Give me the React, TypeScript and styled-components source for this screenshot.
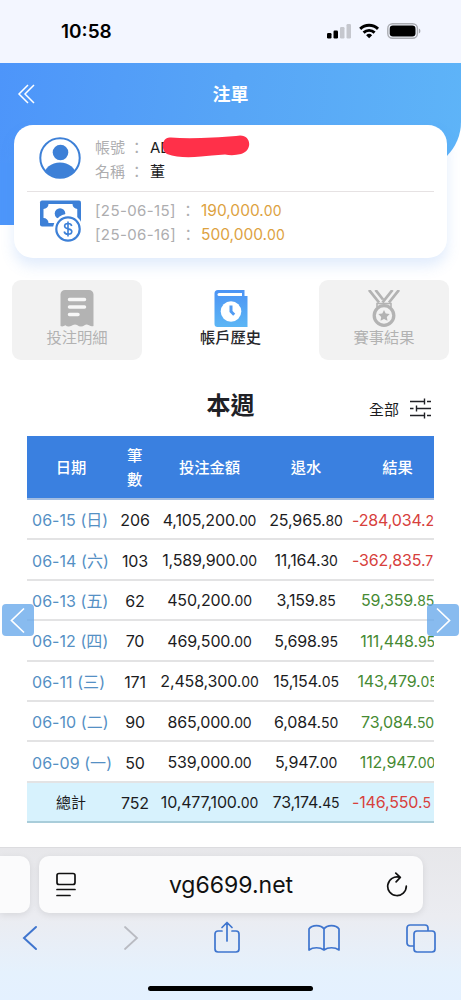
import type { ReactNode } from "react"
import styled, { createGlobalStyle } from "styled-components"

const GlobalStyle = createGlobalStyle`
  * {
    box-sizing: border-box;
  }
  body {
    margin: 0;
    background-color: #ffffff;
    font-family: Inter, "Noto Sans CJK TC", sans-serif;
    color: #1c1c1e;
  }
`

const Screen = styled.div`
  display: flex;
  flex-direction: column;
  width: 461px;
  height: 1000px;
  overflow: hidden;
  background-color: #ffffff;
`

const StatusBar = styled.div`
  display: flex;
  justify-content: space-between;
  flex: none;
  height: 63px;
  padding: 21px 40px 0 61px;
  background-color: #f3f6ff;
`

const Clock = styled.div`
  font-size: 19px;
  font-weight: 600;
  line-height: 21px;
  letter-spacing: 0;
  color: #000000;
`

const Hero = styled.div`
  position: relative;
  flex: none;
  height: 217px;

  /* the blue backdrop is shorter on the right, where its corner is rounded */
  &::before,
  &::after {
    content: "";
    position: absolute;
    top: 0;
    left: 0;
    width: 461px;
    height: 107px;
    border-bottom-right-radius: 48px;
    background: linear-gradient(97deg, #4d95fa 0%, #57a5f6 50%, #5eb4f8 100%);
  }
  &::after {
    top: 100px;
    width: 60px;
    height: 62px;
    border-radius: 0;
    background: #4d96fa;
  }
`

const TitleBar = styled.div`
  position: relative;
  z-index: 1;
  display: grid;
  grid-template-columns: 60px 1fr 60px;
  align-items: center;
  height: 62px;
  color: #ffffff;
`

const Title = styled.div`
  padding-top: 2px;
  text-align: center;
  font-size: 18px;
  font-weight: 700;
  line-height: 26px;
`

const BackIcon = styled.svg`
  display: block;
  margin-left: 17px;
`

const Card = styled.div`
  position: relative;
  z-index: 1;
  margin: 0 14px;
  height: 133px;
  padding: 0 13px;
  border-radius: 19px;
  background-color: #ffffff;
  box-shadow: 0 8px 14px rgba(80, 140, 235, 0.17);
`

const CardSection = styled.div<{ $last?: boolean }>`
  position: relative;
  display: flex;
  gap: 14px;
  height: ${(p) => (p.$last ? "66px" : "67px")};
  padding: ${(p) => (p.$last ? "8px 0 0 12px" : "12px 0 0 12px")};
  border-bottom: ${(p) => (p.$last ? "none" : "1px solid #e6e2e3")};
`

const Lines = styled.div`
  display: flex;
  flex-direction: column;
  margin-top: -1px;
  font-size: 15px;
  line-height: 24px;
`

const Line = styled.div<{ $width: number }>`
  display: grid;
  grid-template-columns: ${(p) => p.$width}px auto;
  height: 24px;
  white-space: pre;
`

const Label = styled.span<{ $spacing?: number }>`
  color: #adadaf;
  letter-spacing: ${(p) => p.$spacing ?? 0}px;
`

const Money = styled.span`
  color: #dda23f;
  font-size: 15.5px;
  letter-spacing: 0;
  small {
    font-size: 14px;
  }
`

const Redaction = styled.svg`
  position: absolute;
  left: 134px;
  top: 8px;
`

const Tabs = styled.div`
  display: flex;
  justify-content: space-between;
  flex: none;
  height: 80px;
  padding: 0 12px;
`

const Tab = styled.div<{ $active?: boolean }>`
  display: flex;
  flex-direction: column;
  align-items: center;
  width: 130px;
  height: 80px;
  padding-top: 10px;
  border-radius: 9px;
  font-size: 15.3px;
  line-height: 22px;
  font-weight: ${(p) => (p.$active ? 500 : 400)};
  color: ${(p) => (p.$active ? "#27272b" : "#b2b2b2")};
  background-color: ${(p) => (p.$active ? "transparent" : "#f2f2f2")};
  svg {
    flex: none;
  }
`

const Heading = styled.div`
  display: grid;
  grid-template-columns: 1fr auto 1fr;
  flex: none;
  height: 76px;
  padding: 28px 30px 0;
`

const Week = styled.div`
  grid-column: 2;
  font-size: 24px;
  font-weight: 700;
  line-height: 36px;
  color: #202126;
`

const Filter = styled.div`
  display: flex;
  align-items: center;
  justify-content: flex-end;
  gap: 11px;
  height: 24px;
  margin-top: 8px;
  font-size: 15px;
`

const History = styled.div`
  position: relative;
  flex: none;
  height: 411px;
  padding: 0 27px;
`

const Table = styled.div`
  width: 407px;
  overflow: hidden;
`

const Row = styled.div<{ $head?: boolean; $total?: boolean }>`
  display: grid;
  grid-template-columns: 88px 40px 109px 84px 99px;
  align-items: center;
  justify-items: center;
  width: 420px;
  height: ${(p) => (p.$head ? "64px" : "40.4px")};
  padding-top: ${(p) => (p.$head ? "1px" : "2px")};
  border-bottom: 2px solid ${(p) => (p.$total ? "#a9cdda" : p.$head ? "#a3bde1" : "#e3e3e4")};
  background-color: ${(p) => (p.$head ? "#3a80e0" : p.$total ? "#d7f2fd" : "#ffffff")};
  font-size: ${(p) => (p.$head ? "15.3px" : "16px")};
  font-weight: ${(p) => (p.$head ? 500 : 400)};
  line-height: 24px;
  white-space: nowrap;
  color: ${(p) => (p.$head ? "#ffffff" : "#1c1c1e")};
`

const Wrapped = styled.span`
  width: 16px;
  white-space: normal;
`

const DateCell = styled.span`
  justify-self: start;
  padding-left: 5px;
  color: #5590c4;
  letter-spacing: 0.05px;
`

const TotalLabel = styled.span`
  font-size: 15px;
`

const Amount = styled.span`
  letter-spacing: -0.15px;
  small {
    font-size: 14px;
  }
`

const Result = styled(Amount)<{ $negative: boolean }>`
  justify-self: ${(p) => (p.$negative ? "start" : "center")};
  padding-left: ${(p) => (p.$negative ? "4px" : "0")};
  color: ${(p) => (p.$negative ? "#d7403c" : "#468a33")};
`

const Pager = styled.div<{ $side: "left" | "right" }>`
  position: absolute;
  top: 168px;
  ${(p) => p.$side}: 2px;
  display: flex;
  align-items: center;
  justify-content: center;
  width: 32px;
  height: 32px;
  border-radius: 4px;
  background-color: rgba(103, 168, 234, 0.78);
`

const Browser = styled.div`
  display: flex;
  flex-direction: column;
  align-items: center;
  flex: none;
  height: 153px;
  border-top: 1px solid #dcdcdf;
  background: linear-gradient(#e7e7ea 0%, #ebecf1 45%, #e5f1fd 82%, #e4f1ff 100%);
`

const AddressRow = styled.div`
  display: flex;
  gap: 9px;
  width: 461px;
  height: 64px;
  padding-top: 8px;
`

const PreviousPage = styled.div`
  width: 30px;
  height: 57px;
  border-radius: 0 10px 10px 0;
  background-color: #fbfbfc;
  box-shadow: 0 2px 7px rgba(0, 0, 0, 0.09);
`

const Address = styled.div`
  display: grid;
  grid-template-columns: 20px 1fr 22px;
  align-items: center;
  width: 384px;
  height: 57px;
  padding: 0 15px 0 17px;
  border-radius: 10px;
  background-color: #fbfbfc;
  box-shadow: 0 2px 7px rgba(0, 0, 0, 0.09);
  font-size: 23px;
  letter-spacing: 0;
  text-align: center;
  color: #111111;
  svg {
    display: block;
  }
`

const Toolbar = styled.div`
  display: grid;
  grid-template-columns: 60px 140px 54px 140px 54px;
  justify-items: center;
  width: 461px;
  height: 66px;
  padding: 9px 0 0;
`

const HomeIndicator = styled.div`
  width: 165px;
  height: 5px;
  margin-top: 8px;
  border-radius: 3px;
  background-color: #000000;
`

// the last digits of the negative results do not fit in the column
const rows = [
  { date: "06-15 (日)", count: 206, bet: "4,105,200.00", rebate: "25,965.80", result: "-284,034.2" },
  { date: "06-14 (六)", count: 103, bet: "1,589,900.00", rebate: "11,164.30", result: "-362,835.7" },
  { date: "06-13 (五)", count: 62, bet: "450,200.00", rebate: "3,159.85", result: "59,359.85" },
  { date: "06-12 (四)", count: 70, bet: "469,500.00", rebate: "5,698.95", result: "111,448.95" },
  { date: "06-11 (三)", count: 171, bet: "2,458,300.00", rebate: "15,154.05", result: "143,479.05" },
  { date: "06-10 (二)", count: 90, bet: "865,000.00", rebate: "6,084.50", result: "73,084.50" },
  { date: "06-09 (一)", count: 50, bet: "539,000.00", rebate: "5,947.00", result: "112,947.00" },
]

// decimals are set a little smaller than the whole part
function split(value: string): ReactNode {
  const [whole, cents] = value.split(".")
  return (
    <>
      {whole}.<small>{cents}</small>
    </>
  )
}

function StatusIcons() {
  return (
    <svg width="95" height="20" viewBox="326 21 95 20">
      <rect x="327" y="33" width="4.5" height="5.5" rx="1.2" fill="#000" />
      <rect x="333.5" y="30.5" width="4.5" height="8" rx="1.2" fill="#000" />
      <rect x="340" y="27" width="4.5" height="11.5" rx="1.2" fill="#c5c7ce" />
      <rect x="346.5" y="24" width="4.5" height="14.5" rx="1.2" fill="#c5c7ce" />
      <g fill="none" stroke="#000" strokeWidth="2.9">
        <path d="M360.2 28.9a12.8 12.8 0 0 1 17.8 0" />
        <path d="M363.6 32.6a8 8 0 0 1 11 0" />
      </g>
      <path d="M369.1 38.3l-3-3a4.3 4.3 0 0 1 6 0z" fill="#000" />
      <rect x="387.8" y="23.7" width="29.6" height="14.6" rx="4.8" fill="#f3f6ff" stroke="#aaacb2" strokeWidth="1.4" />
      <rect x="389.7" y="25.6" width="25.8" height="10.8" rx="3.2" fill="#000" />
      <path d="M418.9 28.6v5a2.8 2.8 0 0 0 0-5z" fill="#a5a7ad" />
    </svg>
  )
}

function UserIcon() {
  return (
    <svg width="42" height="42" viewBox="0 0 42 42">
      <clipPath id="face">
        <circle cx="21" cy="21" r="19.5" />
      </clipPath>
      <g clipPath="url(#face)" fill="#3d80d7">
        <circle cx="21.5" cy="15.5" r="7.8" />
        <ellipse cx="21" cy="38.5" rx="16" ry="13" />
      </g>
      <circle cx="21" cy="21" r="19.7" fill="none" stroke="#3d80d7" strokeWidth="2" />
    </svg>
  )
}

function MoneyIcon() {
  return (
    <svg width="42" height="43" viewBox="0 0 42 43">
      <rect x="1" y="0.5" width="41" height="26" rx="2" fill="#3d80d7" />
      <path d="M9.500 4h24a5 5 0 0 0 5 5v9a5 5 0 0 0-5 5h-24a5 5 0 0 0-5-5v-9a5 5 0 0 0 5-5z" fill="#fff" />
      <circle cx="21" cy="13.500" r="5.300" fill="#3d80d7" />
      <circle cx="29" cy="29" r="15" fill="#fff" />
      <path d="M38.500 9v8l3.500 3V9z" fill="#3d80d7" />
      <circle cx="29" cy="29" r="11.700" fill="#fff" stroke="#3d80d7" strokeWidth="2.200" />
      <path d="M32.700 26c-.3-1.600-1.700-2.500-3.600-2.500-2.100 0-3.500 1-3.500 2.600 0 3.900 7.200 1.700 7.200 5.500 0 1.700-1.500 2.700-3.700 2.700-2.200 0-3.600-1-3.900-2.800M29 21.500v15" fill="none" stroke="#3d80d7" strokeWidth="1.600" />
    </svg>
  )
}

function ReceiptIcon() {
  return (
    <svg width="34" height="37" viewBox="0 0 34 37">
      <path d="M5 0h24a4.500 4.500 0 0 1 4.500 4.500V36q-2 1-4.500-.7-2.500-1.500-4.500 0-1.500 1.300-3.500 1.300t-4-1.500q-2-1.300-4 0t-4 1.500-3.500-1.300q-3 1.800-5 .7V4.500A4.500 4.500 0 0 1 5 0z" fill="#b3b3b3" />
      <path d="M9.500 9.500h15M9.500 17h15M9.500 24.500h8.500" stroke="#f7f7f7" strokeWidth="3.500" strokeLinecap="round" />
    </svg>
  )
}

function BookClockIcon() {
  return (
    <svg width="34" height="37" viewBox="0 0 34 37">
      <defs>
        <linearGradient id="book" x1="0" y1="0" x2="0" y2="1">
          <stop offset="0" stopColor="#4c93f4" />
          <stop offset="1" stopColor="#5cb6f5" />
        </linearGradient>
      </defs>
      <path d="M4 0h26.500v6h3v31H3.500a3 3 0 0 1-3-3V3.500A3.500 3.500 0 0 1 4 0z" fill="url(#book)" />
      <path d="M5 3h23v3H5a1.500 1.500 0 0 1 0-3z" fill="#fff" />
      <circle cx="17" cy="21.500" r="10.300" fill="#fff" />
      <path d="M17 15.500v6l3.200 3.200" fill="none" stroke="#519bf3" strokeWidth="3" />
    </svg>
  )
}

function MedalIcon() {
  return (
    <svg width="34" height="37" viewBox="0 0 34 37">
      <g fill="none" stroke="#b3b3b3">
        <path d="M2 0l10 12.500M8.500 0l7.500 9.500M32 0L22 12.500M25.500 0l-10 12.500" strokeWidth="2.800" />
        <path d="M10 17v-3.500h14V17" strokeWidth="1.600" />
        <circle cx="17" cy="25.500" r="9.800" strokeWidth="3.300" />
      </g>
      <path d="M17 20l1.700 3.600 4 .5-2.900 2.800.7 3.900-3.500-1.900-3.500 1.900.7-3.900-2.900-2.800 4-.5z" fill="#b3b3b3" />
    </svg>
  )
}

function SlidersIcon() {
  return (
    <svg width="21" height="21" viewBox="0 0 21 21" fill="none" stroke="#202126" strokeWidth="1.400">
      <path d="M0 3.500h14.500M17 3.500h4M0 10.500h3.500M6.500 10.500H21M0 17.500h14.500M17 17.500h4M14.500 .5v6M6.500 7.500v6M14.500 14.500v6" />
    </svg>
  )
}

function App() {
  return (
    <Screen>
      <GlobalStyle />
      <StatusBar>
        <Clock>10:58</Clock>
        <StatusIcons />
      </StatusBar>

      <Hero>
        <TitleBar>
          <BackIcon width="18" height="20" viewBox="0 0 18 20" fill="none" stroke="#fff" strokeWidth="1.5">
            <path d="M11 1L2 10l9 9M17 1L8 10l9 9" />
          </BackIcon>
          <Title>注單</Title>
        </TitleBar>
        <Card>
          <CardSection>
            <UserIcon />
            <Lines>
              <Line $width={55}>
                <Label>帳號 ：</Label>
                <span>AD</span>
              </Line>
              <Line $width={55}>
                <Label>名稱 ：</Label>
                <span>董</span>
              </Line>
            </Lines>
            <Redaction width="90" height="26" viewBox="0 0 90 26">
              <path d="M10 4.500Q22 5.500 40 5 58 4.500 75 3C90-1 93 17 80 21Q72 23 64 21.500 50 22.500 40 23.500 20 26 6 21C-1 17 1 3 10 4.500z" fill="#ff3049" />
            </Redaction>
          </CardSection>
          <CardSection $last>
            <MoneyIcon />
            <Lines>
              <Line $width={106}>
                <Label $spacing={0.4}>[25-06-15] ：</Label>
                <Money>{split("190,000.00")}</Money>
              </Line>
              <Line $width={106}>
                <Label $spacing={0.4}>[25-06-16] ：</Label>
                <Money>{split("500,000.00")}</Money>
              </Line>
            </Lines>
          </CardSection>
        </Card>
      </Hero>

      <Tabs>
        <Tab>
          <ReceiptIcon />
          投注明細
        </Tab>
        <Tab $active>
          <BookClockIcon />
          帳戶歷史
        </Tab>
        <Tab>
          <MedalIcon />
          賽事結果
        </Tab>
      </Tabs>

      <Heading>
        <Week>本週</Week>
        <Filter>
          全部
          <SlidersIcon />
        </Filter>
      </Heading>

      <History>
        <Table>
          <Row $head>
            <span>日期</span>
            <Wrapped>筆數</Wrapped>
            <span>投注金額</span>
            <span>退水</span>
            <span>結果</span>
          </Row>
          {rows.map((row) => (
            <Row key={row.date}>
              <DateCell>{row.date}</DateCell>
              <Amount>{row.count}</Amount>
              <Amount>{split(row.bet)}</Amount>
              <Amount>{split(row.rebate)}</Amount>
              <Result $negative={row.result.startsWith("-")}>{split(row.result)}</Result>
            </Row>
          ))}
          <Row $total>
            <TotalLabel>總計</TotalLabel>
            <Amount>752</Amount>
            <Amount>{split("10,477,100.00")}</Amount>
            <Amount>{split("73,174.45")}</Amount>
            <Result $negative>{split("-146,550.5")}</Result>
          </Row>
        </Table>
        <Pager $side="left">
          <svg width="20" height="28" viewBox="0 0 20 28" fill="none" stroke="#fff" strokeWidth="1.700">
            <path d="M16 2.500L3.500 14.500 16 26.500" />
          </svg>
        </Pager>
        <Pager $side="right">
          <svg width="20" height="28" viewBox="0 0 20 28" fill="none" stroke="#fff" strokeWidth="1.700">
            <path d="M4 2.500l12.500 12L4 26.500" />
          </svg>
        </Pager>
      </History>

      <Browser>
        <AddressRow>
          <PreviousPage />
          <Address>
            <svg width="20" height="26" viewBox="0 0 20 26" fill="none" stroke="#111" strokeWidth="1.700" strokeLinecap="round">
              <rect x="1" y="1.500" width="18" height="11" rx="2" />
              <path d="M1 17.500h18M1 23.500h13" />
            </svg>
            <span>vg6699.net</span>
            <svg width="22" height="26" viewBox="0 0 22 26" fill="none" stroke="#111" strokeWidth="1.700" strokeLinecap="round" strokeLinejoin="round">
              <path d="M13.500 5.300A9.300 9.300 0 1 0 20.300 14.200M9.800 1.200l4.500 4.200-4.200 4.400" />
            </svg>
          </Address>
        </AddressRow>
        <Toolbar>
          <svg width="20" height="34" viewBox="0 0 20 34" fill="none" stroke="#3f75ce" strokeWidth="2" strokeLinecap="round">
            <path d="M16 6L4 17l12 11" />
          </svg>
          <svg width="20" height="34" viewBox="0 0 20 34" fill="none" stroke="#b9bbc2" strokeWidth="1.800" strokeLinecap="round">
            <path d="M5 6l12 11L5 28" />
          </svg>
          <svg width="28" height="34" viewBox="0 0 28 34" fill="none" stroke="#3f75ce" strokeWidth="1.700" strokeLinecap="round" strokeLinejoin="round">
            <path d="M9 10H5a3 3 0 0 0-3 3v15a3 3 0 0 0 3 3h18a3 3 0 0 0 3-3V13a3 3 0 0 0-3-3h-4M14 20V1.500M9 6.500l5-5 5 5" />
          </svg>
          <svg width="34" height="34" viewBox="0 0 34 34" fill="none" stroke="#3f75ce" strokeWidth="1.700" strokeLinejoin="round">
            <path d="M17 8v21c-4-3-11-3-15 0V8c3-4.500 12-4.500 15 0 3-4.500 12-4.500 15 0v21c-4-3-11-3-15 0" />
          </svg>
          <svg width="32" height="34" viewBox="0 0 32 34" fill="none" stroke="#3f75ce" strokeWidth="1.700">
            <rect x="9" y="10" width="21" height="21" rx="3" />
            <path d="M9 25H5a3 3 0 0 1-3-3V7a3 3 0 0 1 3-3h15a3 3 0 0 1 3 3v3" />
          </svg>
        </Toolbar>
        <HomeIndicator />
      </Browser>
    </Screen>
  )
}

export default App
